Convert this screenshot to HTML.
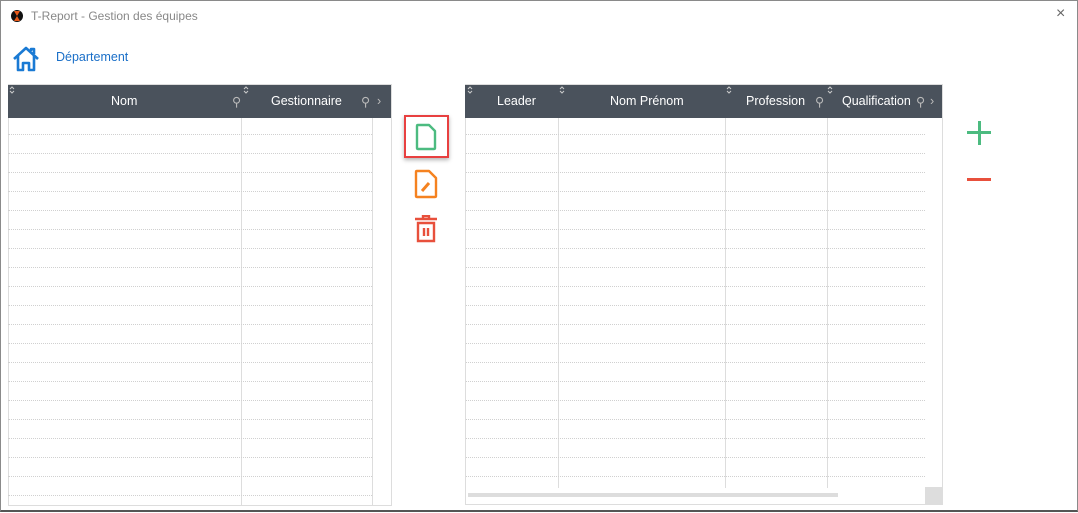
<!DOCTYPE html>
<html><head><meta charset="utf-8"><style>
*{margin:0;padding:0;box-sizing:border-box}
body{width:1078px;height:512px;background:#fff;font-family:"Liberation Sans",sans-serif;position:relative;overflow:hidden}
.frame{position:absolute;left:0;top:0;width:1078px;height:512px;border:1px solid #8a8a8a;border-bottom:2px solid #555;pointer-events:none;z-index:5}
.w{position:absolute;left:1px;top:1px;width:1078px;height:512px}
.a{position:absolute}
.hdr{background:#4a525c;color:#fff;font-size:12.5px;height:33px;top:84px}
.hdr span{position:absolute;top:9px}
.rl{position:absolute;left:0;height:0;border-top:1px dotted #d0d0d0}
.vl{position:absolute;width:1px;background:#ddd}
.sort{position:absolute;top:1px}
</style></head><body>
<div class="frame"></div>
<div class="w">
<div class="a" style="left:10px;top:9px;width:12px;height:12px;border-radius:6px;background:#111"></div>
<div class="a" style="left:13px;top:10px;width:6px;height:10px;background:#e85a1a;clip-path:polygon(0 0,100% 0,50% 50%,100% 100%,0 100%,50% 50%)"></div>
<div class="a" style="left:30px;top:8px;font-size:12px;color:#888">T-Report - Gestion des équipes</div>
<div class="a" style="left:1055px;top:4px;font-size:16px;color:#666">×</div>
<svg class="a" style="left:11px;top:44px" width="28" height="28" viewBox="0 0 28 28"><path d="M2 14 L14 3 L26 14 M6 11 V25 H11 V18 H17 V25 H22 V11 M19 6 V4 H22 V9" fill="none" stroke="#1a7ad4" stroke-width="2.6" stroke-linejoin="round"/></svg>
<div class="a" style="left:55px;top:49px;font-size:12.5px;color:#1a6fc8">Département</div>

<div class="a" style="left:7px;top:83px;width:384px;height:422px;border:1px solid #ddd"></div>
<div class="a hdr" style="left:7px;width:383px">
<svg class="sort" style="left:1px" width="6" height="8"><path d="M1 3 L3 1 L5 3 M1 5 L3 7 L5 5" fill="none" stroke="#ccc"/></svg>
<svg class="sort" style="left:235px" width="6" height="8"><path d="M1 3 L3 1 L5 3 M1 5 L3 7 L5 5" fill="none" stroke="#ccc"/></svg>
<span style="left:103px">Nom</span><span style="left:224px;color:#bbb">⚲</span>
<span style="left:263px">Gestionnaire</span><span style="left:353px;color:#bbb">⚲</span><span style="left:369px;color:#bbb">›</span>
</div>
<div class="vl a" style="left:240px;top:117px;height:388px"></div>
<div class="vl a" style="left:371px;top:117px;height:388px"></div>
<div id="L" class="a" style="left:7px;top:-1px;width:364px"></div>

<div class="a" style="left:403px;top:114px;width:45px;height:43px;border:2px solid #e84040;box-shadow:0 2px 4px rgba(0,0,0,.3)"></div>
<svg class="a" style="left:414px;top:122px" width="22" height="28" viewBox="0 0 22 28"><path d="M3 2 H14 L20 8 V25 Q20 26 19 26 H3 Q2 26 2 25 V3 Q2 2 3 2 Z" fill="none" stroke="#4cbb80" stroke-width="2.4" stroke-linejoin="round"/></svg>
<svg class="a" style="left:413px;top:168px" width="24" height="30" viewBox="0 0 24 30"><path d="M3 2 H15 L22 9 V27 Q22 28 21 28 H3 Q2 28 2 27 V3 Q2 2 3 2 Z" fill="none" stroke="#f58220" stroke-width="2.4" stroke-linejoin="round"/><path d="M8 22 L15 14" stroke="#f58220" stroke-width="3"/></svg>
<svg class="a" style="left:413px;top:214px" width="24" height="28" viewBox="0 0 24 28"><path d="M1 4 H23 M9 4 V1 H15 V4 M4 8 H20 V26 H4 Z" fill="none" stroke="#e8503c" stroke-width="2.4"/><path d="M10 13 V21 M14 13 V21" stroke="#e8503c" stroke-width="2.4"/></svg>

<div class="a" style="left:464px;top:83px;width:478px;height:421px;border:1px solid #ddd"></div>
<div class="a hdr" style="left:464px;width:477px">
<svg class="sort" style="left:2px" width="6" height="8"><path d="M1 3 L3 1 L5 3 M1 5 L3 7 L5 5" fill="none" stroke="#ccc"/></svg>
<svg class="sort" style="left:94px" width="6" height="8"><path d="M1 3 L3 1 L5 3 M1 5 L3 7 L5 5" fill="none" stroke="#ccc"/></svg>
<svg class="sort" style="left:261px" width="6" height="8"><path d="M1 3 L3 1 L5 3 M1 5 L3 7 L5 5" fill="none" stroke="#ccc"/></svg>
<svg class="sort" style="left:362px" width="6" height="8"><path d="M1 3 L3 1 L5 3 M1 5 L3 7 L5 5" fill="none" stroke="#ccc"/></svg>
<span style="left:32px">Leader</span><span style="left:145px">Nom Prénom</span>
<span style="left:281px">Profession</span><span style="left:350px;color:#bbb">⚲</span>
<span style="left:377px">Qualification</span><span style="left:451px;color:#bbb">⚲</span><span style="left:465px;color:#bbb">›</span>
</div>
<div class="vl a" style="left:557px;top:117px;height:370px"></div>
<div class="vl a" style="left:724px;top:117px;height:370px"></div>
<div class="vl a" style="left:826px;top:117px;height:370px"></div>
<div id="R" class="a" style="left:465px;top:-1px;width:459px"></div>
<div class="a" style="left:467px;top:492px;width:370px;height:4px;background:#ddd"></div>
<div class="a" style="left:924px;top:486px;width:17px;height:17px;background:#ddd"></div>

<div class="a" style="left:966px;top:130px;width:24px;height:3px;background:#4cbb80"></div>
<div class="a" style="left:977px;top:120px;width:3px;height:24px;background:#4cbb80"></div>
<div class="a" style="left:966px;top:177px;width:24px;height:3px;background:#e8503c"></div>
</div>
<script>
var L=document.getElementById('L'),R=document.getElementById('R'),h='',g='';
for(var y=134;y<505;y+=19){h+='<div class="rl" style="top:'+y+'px;width:364px"></div>';if(y<487)g+='<div class="rl" style="top:'+y+'px;width:459px"></div>';}
L.innerHTML=h;R.innerHTML=g;
</script>
</body></html>
